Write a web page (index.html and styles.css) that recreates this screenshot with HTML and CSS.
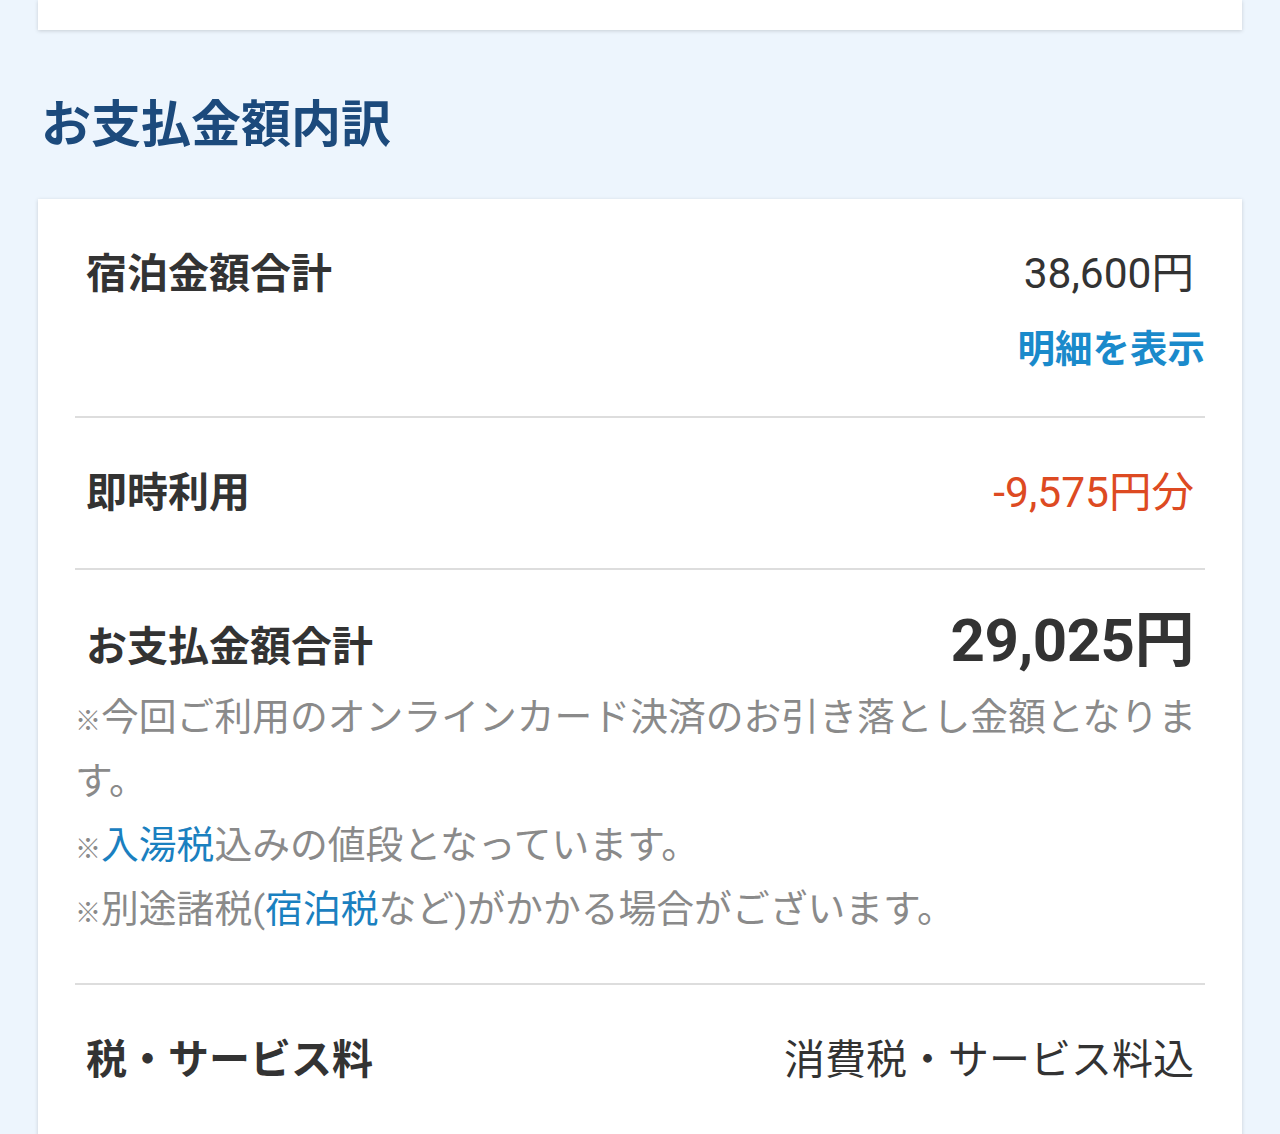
FILE: index.html
```html
<!DOCTYPE html>
<html lang="ja">
<head>
<meta charset="utf-8">
<link rel="stylesheet" href="styles.css">
</head>
<body>
<div class="page">
  <div class="card card-top"></div>
  <h2 class="section-title">お支払金額内訳</h2>
  <div class="card">
    <div class="row row-first">
      <div class="row-head">
        <div class="label">宿泊金額合計</div>
        <div class="value">38,600円</div>
      </div>
      <div class="link-line"><a class="detail-link">明細を表示</a></div>
    </div>
    <div class="row">
      <div class="row-head">
        <div class="label">即時利用</div>
        <div class="value value-red">-9,575円分</div>
      </div>
    </div>
    <div class="row row-total">
      <div class="row-head row-head-total">
        <div class="label">お支払金額合計</div>
        <div class="value value-total">29,025円</div>
      </div>
      <div class="notes">
        <p><span class="kome">※</span>今回ご利用のオンラインカード決済のお引き落とし金額となります。</p>
        <p><span class="kome">※</span><a class="note-link">入湯税</a>込みの値段となっています。</p>
        <p><span class="kome">※</span>別途諸税(<a class="note-link">宿泊税</a>など)がかかる場合がございます。</p>
      </div>
    </div>
    <div class="row row-last">
      <div class="row-head">
        <div class="label">税・サービス料</div>
        <div class="value value-text">消費税・サービス料込</div>
      </div>
    </div>
  </div>
</div>
</body>
</html>
```

FILE: styles.css
```css
html, body {
  margin: 0;
  padding: 0;
  background: #edf5fd;
}
body {
  font-family: Roboto, "Noto Sans CJK JP", sans-serif;
  color: #333333;
}
.page {
  padding: 0 38px;
}
.card {
  background: #ffffff;
  box-shadow: 0 1px 4px rgba(0, 0, 0, 0.16);
  padding: 0 37px;
}
.card-top {
  height: 30px;
}
.section-title {
  margin: 60px 0 39px 3px;
  font-size: 50px;
  line-height: 70px;
  font-weight: 700;
  color: #1c4a7c;
}
.row {
  padding: 45px 11px 45px;
  border-bottom: 2px solid #dddddd;
}
.row-first {
  padding-bottom: 36px;
}
.row-last {
  border-bottom: none;
  padding-bottom: 60px;
}
.row-head {
  display: flex;
  justify-content: space-between;
  align-items: baseline;
}
.label {
  font-size: 41px;
  line-height: 60px;
  font-weight: 700;
  color: #333333;
}
.value {
  font-size: 42.5px;
  line-height: 60px;
  color: #333333;
}
.value-text {
  font-size: 41px;
}
.value-red {
  color: #dd4a22;
}
.link-line {
  text-align: right;
  margin: 22px -11px 0 0;
  line-height: 46px;
}
.detail-link {
  font-size: 37.5px;
  font-weight: 700;
  color: #1a8acb;
}
.row-total {
  padding: 36px 0 42px;
}
.row-head-total {
  padding: 0 11px;
}
.value-total {
  font-size: 60px;
  line-height: 70px;
  font-weight: 700;
  letter-spacing: -0.5px;
}
.notes {
  margin-top: 8px;
}
.notes p {
  margin: 0;
  font-size: 37.8px;
  line-height: 64px;
  color: #8a8a8a;
}
.kome {
  font-size: 26px;
  line-height: 1;
}
.note-link {
  color: #1a80c0;
}
```
